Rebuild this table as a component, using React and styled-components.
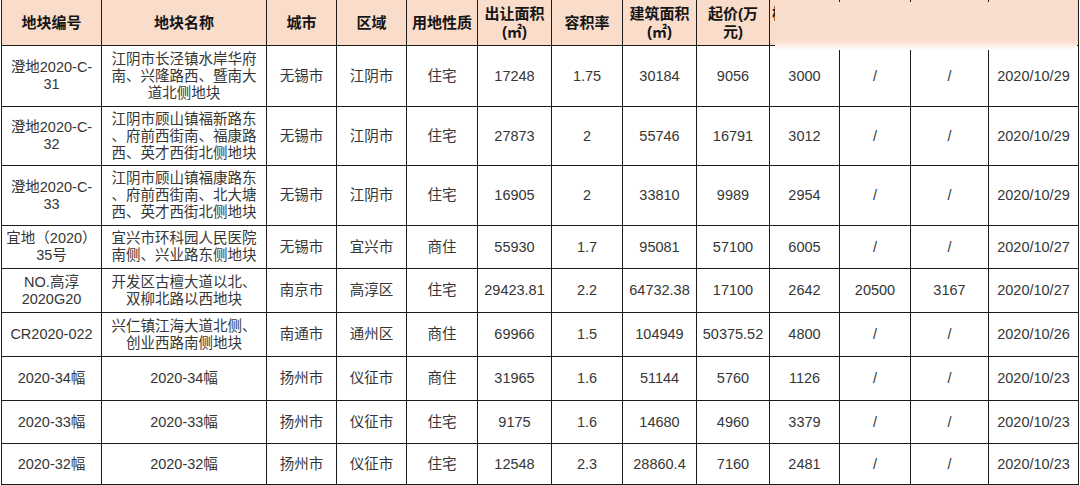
import styled, { createGlobalStyle } from 'styled-components';

const GlobalStyle = createGlobalStyle`
  html, body {
    margin: 0;
    padding: 0;
    background: #ffffff;
  }
  body {
    font-family: "Liberation Sans", "Noto Sans CJK SC", sans-serif;
  }
`;

const widths = [100, 165, 70, 70, 71, 74, 71, 74, 73, 70, 71, 78, 90];

const headers = [
  '地块编号',
  '地块名称',
  '城市',
  '区域',
  '用地性质',
  '出让面积\n(㎡)',
  '容积率',
  '建筑面积\n(㎡)',
  '起价(万\n元)',
  '楼面价(元\n/㎡)',
  '最高限价\n(万元)',
  '配建面积\n(㎡)',
  '出让日期',
];

const rows = [
  {
    h: 61,
    cells: ['澄地2020-C-\n31', '江阴市长泾镇水岸华府\n南、兴隆路西、暨南大\n道北侧地块', '无锡市', '江阴市', '住宅', '17248', '1.75', '30184', '9056', '3000', '/', '/', '2020/10/29'],
  },
  {
    h: 59,
    cells: ['澄地2020-C-\n32', '江阴市顾山镇福新路东\n、府前西街南、福康路\n西、英才西街北侧地块', '无锡市', '江阴市', '住宅', '27873', '2', '55746', '16791', '3012', '/', '/', '2020/10/29'],
  },
  {
    h: 60,
    cells: ['澄地2020-C-\n33', '江阴市顾山镇福康路东\n、府前西街南、北大塘\n西、英才西街北侧地块', '无锡市', '江阴市', '住宅', '16905', '2', '33810', '9989', '2954', '/', '/', '2020/10/29'],
  },
  {
    h: 43,
    cells: ['宜地（2020）\n35号', '宜兴市环科园人民医院\n南侧、兴业路东侧地块', '无锡市', '宜兴市', '商住', '55930', '1.7', '95081', '57100', '6005', '/', '/', '2020/10/27'],
  },
  {
    h: 44,
    cells: ['NO.高淳\n2020G20', '开发区古檀大道以北、\n双柳北路以西地块', '南京市', '高淳区', '住宅', '29423.81', '2.2', '64732.38', '17100', '2642', '20500', '3167', '2020/10/27'],
  },
  {
    h: 44,
    cells: ['CR2020-022', '兴仁镇江海大道北侧、\n创业西路南侧地块', '南通市', '通州区', '商住', '69966', '1.5', '104949', '50375.52', '4800', '/', '/', '2020/10/26'],
  },
  {
    h: 44,
    cells: ['2020-34幅', '2020-34幅', '扬州市', '仪征市', '商住', '31965', '1.6', '51144', '5760', '1126', '/', '/', '2020/10/23'],
  },
  {
    h: 43,
    cells: ['2020-33幅', '2020-33幅', '扬州市', '仪征市', '住宅', '9175', '1.6', '14680', '4960', '3379', '/', '/', '2020/10/23'],
  },
  {
    h: 41,
    cells: ['2020-32幅', '2020-32幅', '扬州市', '仪征市', '住宅', '12548', '2.3', '28860.4', '7160', '2481', '/', '/', '2020/10/23'],
  },
];

export default function App() {
  return (
    <>
      <GlobalStyle />
      <Frame>
        <Sheet>
          <colgroup>
            {widths.map((w, i) => (
              <col key={i} style={{width: w}} />
            ))}
          </colgroup>
          <thead>
            <Row $h={46}>
              {headers.map(label => (
                <HeadCell key={label}>{label}</HeadCell>
              ))}
            </Row>
          </thead>
          <tbody>
            {rows.map((row, r) => (
              <Row key={r} $h={row.h}>
                {row.cells.map((value, c) => (
                  <Cell key={c}>{value}</Cell>
                ))}
              </Row>
            ))}
          </tbody>
        </Sheet>
        <Veil />
      </Frame>
    </>
  );
}

const Frame = styled.div`
  position: relative;
  width: 1080px;
  height: 485px;
  overflow: hidden;
`;

const Sheet = styled.table`
  border-collapse: collapse;
  table-layout: fixed;
  width: 1078px;
  margin: -1px 0 0 1px;
`;

const Row = styled.tr`
  height: ${({$h}) => $h}px;
`;

const HeadCell = styled.th`
  background: #f9dcca;
  border: 1px solid #1c1c1c;
  padding: 0 1px;
  font-size: 15px;
  line-height: 18px;
  font-weight: 700;
  color: #151515;
  text-align: center;
  vertical-align: middle;
  white-space: pre;
  overflow: hidden;
`;

const Cell = styled.td`
  border: 1px solid #1c1c1c;
  padding: 0 1px;
  font-size: 14.5px;
  line-height: 17px;
  color: #363636;
  text-align: center;
  vertical-align: middle;
  white-space: pre;
  overflow: hidden;
`;

/* pale patch pasted over the last header cells */
const Veil = styled.div`
  position: absolute;
  top: 2px;
  left: 775px;
  width: 302px;
  height: 48px;
  background-color: #fadecd;

  &::after {
    content: '';
    position: absolute;
    left: 0;
    right: 0;
    bottom: 0;
    height: 9px;
    background: linear-gradient(to bottom, rgba(255, 255, 255, 0), #ffffff);
  }
`;
